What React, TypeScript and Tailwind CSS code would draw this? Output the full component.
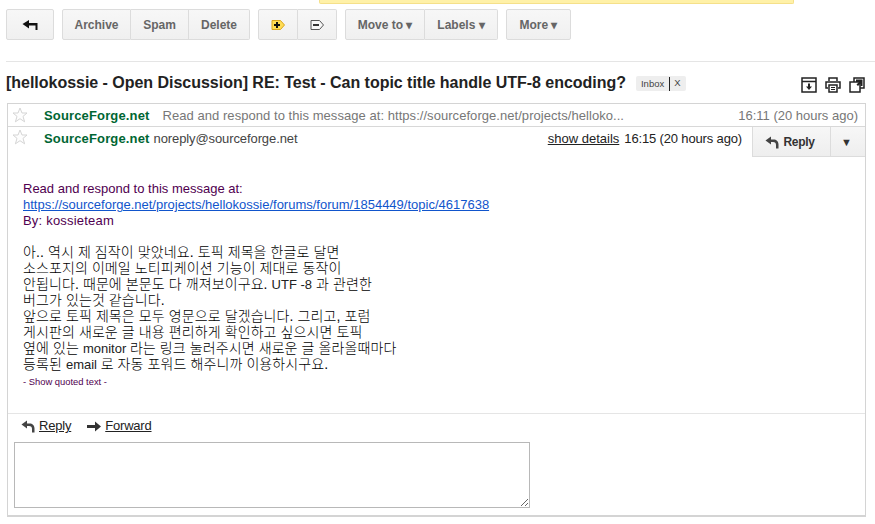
import React from 'react'

const Btn = ({ children, className = '' }: { children: React.ReactNode; className?: string }) => (
  <div className={`h-[31px] flex items-center justify-center border border-[#dcdcdc] bg-gradient-to-b from-[#f7f7f7] to-[#f0f0f0] text-[12px] font-bold text-[#666] ${className}`}>
    {children}
  </div>
)

const Star = () => (
  <svg width="16" height="16" viewBox="0 0 16 16" className="shrink-0">
    <path d="M8 1l2 5h5l-4 3.400 1.600 5.400L8 11.700l-4.600 3.100L5 9.400 1 6h5z" fill="#fdfdfd" stroke="#d5d5d5" />
  </svg>
)

const ReplyIcon = () => (
  <svg width="14" height="13" viewBox="0 0 14 13">
    <path d="M6 0.500L0.500 4.500 6 8.500V6h2c2 0 3 1 3 3v3.500h2.500V8.500c0-3-2-5-5-5H6z" fill="#444" />
  </svg>
)

const bodyLines = [
  '아.. 역시 제 짐작이 맞았네요. 토픽 제목을 한글로 달면',
  '소스포지의 이메일 노티피케이션 기능이 제대로 동작이',
  '안됩니다. 때문에 본문도 다 깨져보이구요. UTF -8 과 관련한',
  '버그가 있는것 같습니다.',
  '앞으로 토픽 제목은 모두 영문으로 달겠습니다. 그리고, 포럼',
  '게시판의 새로운 글 내용 편리하게 확인하고 싶으시면 토픽',
  '옆에 있는 monitor 라는 링크 눌러주시면 새로운 글 올라올때마다',
  '등록된 email 로 자동 포워드 해주니까 이용하시구요.',
]

// hangul runs sit a size up, the latin words stay at body size
const BodyLine = ({ text }: { text: string }) => (
  <div className="h-[16px] whitespace-nowrap">
    {text.split(/([A-Za-z]+ ?-?[0-9]*)/).map((part, i) =>
      i % 2 === 1 ? (
        <span key={i}>{part}</span>
      ) : (
        <span key={i} className="text-[14px] text-black tracking-[0.1px] font-light leading-none">{part}</span>
      )
    )}
  </div>
)

export default function App() {
  return (
    <div className="w-[875px] h-[524px] overflow-hidden bg-white text-[#222] font-['Liberation_Sans','Noto_Sans_CJK_KR',sans-serif]">
      <div className="ml-[319px] w-[475px] h-[4px] bg-[#fff1a8] border border-t-0 border-[#f5e08a] rounded-b-[2px]" />

      <div className="flex pl-[6px] mt-[5px]">
        <Btn className="w-[48px] rounded-[2px]">
          <svg width="16" height="10" viewBox="0 0 16 10" className="mr-[1px]">
            <path d="M7 0L0.500 4 7 8.500V5.500h6.500V10H15.500V3H7z" fill="#111" />
          </svg>
        </Btn>
        <div className="flex ml-[8px]">
          <Btn className="w-[69px] rounded-l-[2px]">Archive</Btn>
          <Btn className="w-[58px] border-l-0">Spam</Btn>
          <Btn className="w-[61px] border-l-0 rounded-r-[2px]">Delete</Btn>
        </div>
        <div className="flex ml-[8px]">
          <Btn className="w-[40px] rounded-l-[2px]">
            <svg width="14" height="10" viewBox="0 0 14 10">
              <path d="M1 .5h8.500L13.500 5l-4 4.500H1z" fill="#ffdd55" stroke="#d9a520" />
              <path d="M5 2h2V4h2V6H7V8H5V6H3V4h2z" fill="#111" />
            </svg>
          </Btn>
          <Btn className="w-[39px] border-l-0 rounded-r-[2px]">
            <svg width="14" height="10" viewBox="0 0 14 10">
              <path d="M1 .5h8.500L13.500 5l-4 4.500H1z" fill="#f7f7f7" stroke="#555" />
              <rect x="3" y="4" width="6" height="2" fill="#333" />
            </svg>
          </Btn>
        </div>
        <div className="flex ml-[8px]">
          <Btn className="w-[80px] rounded-l-[2px]">Move to ▾</Btn>
          <Btn className="w-[73px] border-l-0 rounded-r-[2px]">Labels ▾</Btn>
        </div>
        <Btn className="w-[65px] ml-[8px] rounded-[2px]">More ▾</Btn>
      </div>

      <div className="ml-[6px] mt-[21px] h-px bg-[#e5e5e5]" />

      <div className="flex items-center h-[30px] mt-[6px] pl-[6px] pr-[10px]">
        <h1 className="text-[16px] font-bold text-[#222] leading-none tracking-[-0.025px]">
          [hellokossie - Open Discussion] RE: Test - Can topic title handle UTF-8 encoding?
        </h1>
        <div className="flex items-center ml-[10px] mt-[1px] h-[15px] px-[5px] bg-[#eeeeee] rounded-[2px] text-[9.5px] text-[#444]">
          <span className="pr-[5px] border-r border-[#222] leading-[14px]">Inbox</span>
          <span className="pl-[4px]">X</span>
        </div>
        <div className="flex items-center gap-[8px] ml-auto mt-[3px]">
          <svg width="16" height="16" viewBox="0 0 16 16">
            <path d="M1 1h14v14H1zM1 4.500h14" fill="none" stroke="#222" strokeWidth="1.500" />
            <path d="M7 6.500h2v3h2L8 13 5 9.500h2z" fill="#222" />
          </svg>
          <svg width="16" height="16" viewBox="0 0 16 16">
            <path d="M4 4V1h8v3M3 11H1V5h14v6h-2" fill="none" stroke="#222" strokeWidth="1.500" />
            <path d="M4 8h8v7H4z" fill="#fff" stroke="#222" strokeWidth="1.500" />
            <path d="M6 10.500h4M6 12.500h4" stroke="#222" />
          </svg>
          <svg width="16" height="16" viewBox="0 0 16 16">
            <path d="M5 5V1h10v10h-4" fill="none" stroke="#222" strokeWidth="1.500" />
            <path d="M1 5h10v10H1z" fill="#fff" stroke="#222" strokeWidth="1.500" />
            <path d="M7 2.500h6.500V9h-2V6.500L9 9 7.500 7.500 10 5H7z" fill="#222" />
          </svg>
        </div>
      </div>

      <div className="ml-[7px] mt-[5px] w-[859px] h-[414px] border border-[#d4d4d4] border-b-2 flex flex-col">
        <div className="flex items-center h-[23px] pr-[7px] text-[13px] border-b border-[#d8d8d8]">
          <div className="w-[36px] pl-[4px]"><Star /></div>
          <span className="pt-[1px] font-bold text-[#006633] tracking-[0.15px]">SourceForge.net</span>
          <span className="pt-[1px] ml-[13px] text-[#777] tracking-[0.05px]">Read and respond to this message at: https://sourceforge.net/projects/helloko...</span>
          <span className="pt-[1px] ml-auto text-[#777]">16:11 (20 hours ago)</span>
        </div>

        <div className="flex h-[30px] text-[13px]">
          <div className="w-[36px] pl-[4px] pt-[2px]"><Star /></div>
          <span className="pt-[2px] font-bold text-[#006633] tracking-[0.15px]">SourceForge.net</span>
          <span className="pt-[2px] ml-[4px] text-[#444] tracking-[-0.1px]">noreply@sourceforge.net</span>
          <span className="pt-[2px] ml-auto underline text-[#222]">show details</span>
          <span className="pt-[2px] ml-[5px] mr-[10px] text-[#222] tracking-[-0.15px]">16:15 (20 hours ago)</span>
          <div className="flex w-[113px] h-[30px] bg-gradient-to-b from-[#f7f7f7] to-[#eeeeee] border-l border-b border-[#dcdcdc] text-[12px] font-bold text-[#333]">
            <div className="w-[78px] flex items-center justify-center gap-[4px] border-r border-[#dcdcdc] pt-[1px] pr-[3px] tracking-[-0.3px]">
              <ReplyIcon />
              Reply
            </div>
            <div className="flex-1 flex items-center justify-center text-[11px] pt-[1px] pr-[3px]">▼</div>
          </div>
        </div>

        <div className="pl-[15px] pt-[24px] h-[256px] text-[13px] leading-[16px]">
          <div className="text-[#500050]">Read and respond to this message at:</div>
          <a className="block text-[#1155cc] underline">https://sourceforge.net/projects/hellokossie/forums/forum/1854449/topic/4617638</a>
          <div className="text-[#500050] tracking-[0.2px]">By: kossieteam</div>
          <div className="mt-[16px] text-[#222]">
            {bodyLines.map((line, i) => (
              <BodyLine key={i} text={line} />
            ))}
          </div>
          <div className="mt-[2px] text-[9.4px] text-[#500050] leading-[14px]">- Show quoted text -</div>
        </div>

        <div className="border-t border-[#e5e5e5] flex items-center h-[25px] pl-[13px] text-[13px] text-[#222] tracking-[-0.2px]">
          <ReplyIcon />
          <span className="ml-[4px] underline">Reply</span>
          <svg width="14" height="11" viewBox="0 0 14 11" className="ml-[16px]">
            <path d="M0 4h8V0.500l6 5-6 5V7H0z" fill="#333" />
          </svg>
          <span className="ml-[4px] underline">Forward</span>
        </div>

        <textarea className="ml-[6px] mt-[4px] w-[516px] h-[66px] border border-[#b8b8b8] outline-none" />
      </div>
    </div>
  )
}
